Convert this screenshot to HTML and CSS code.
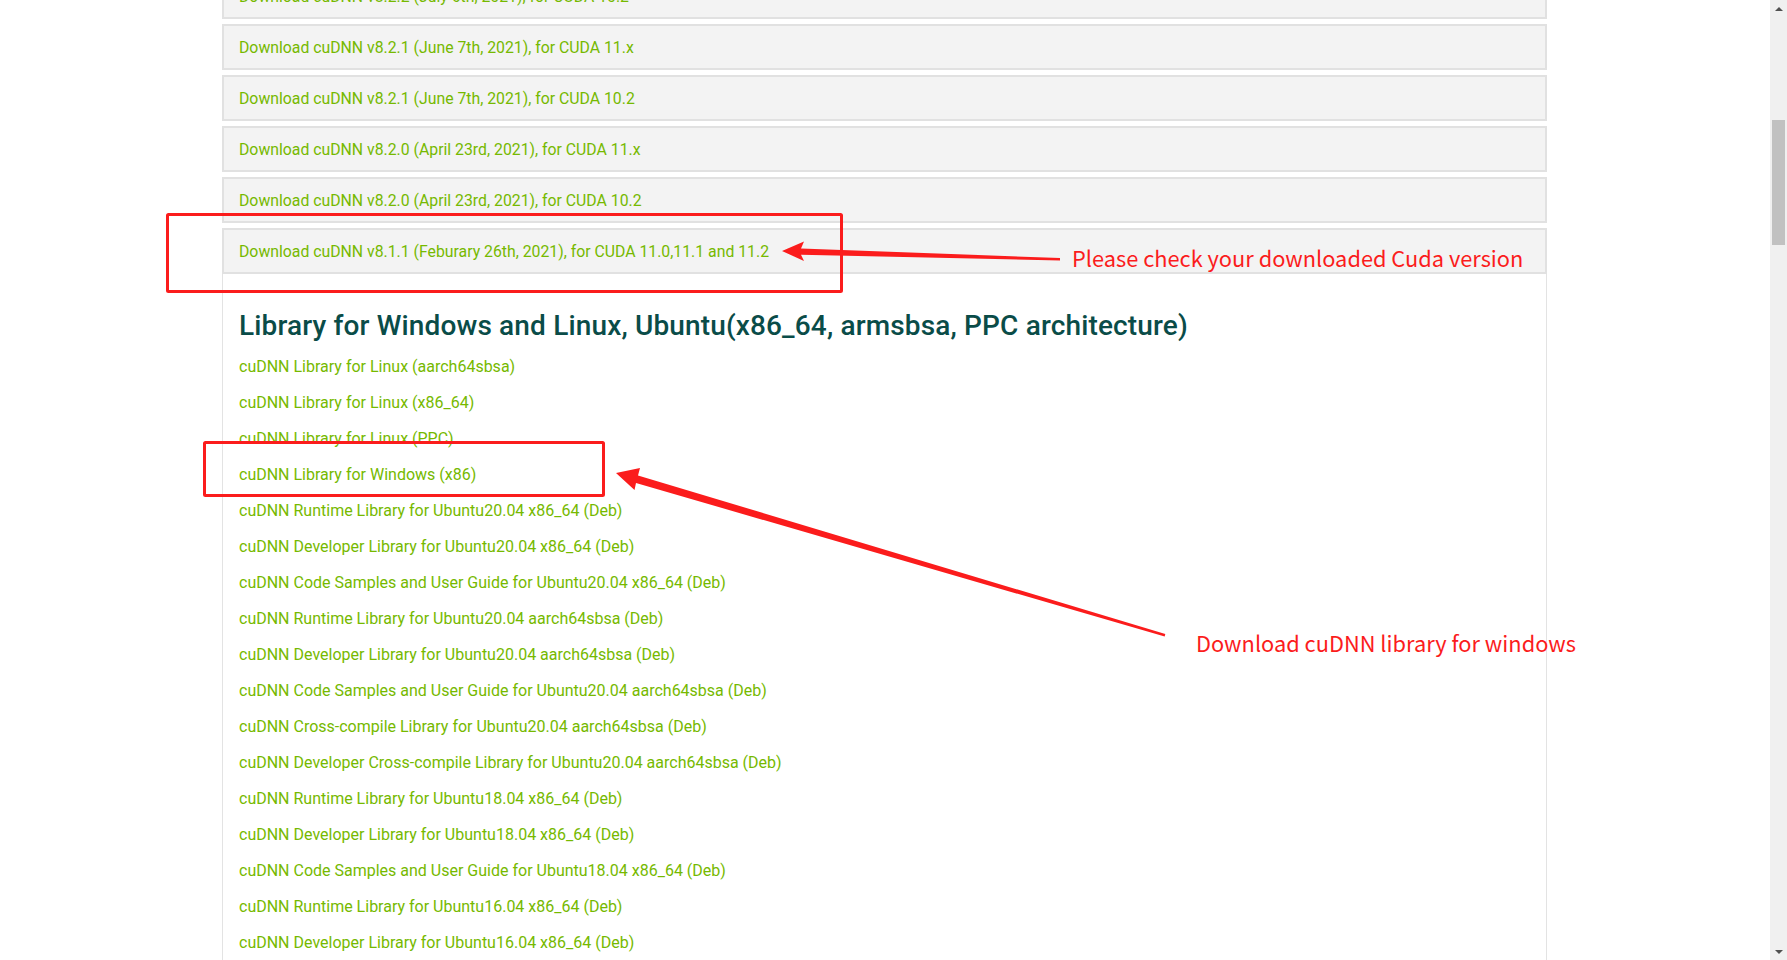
FILE: index.html
```html
<!DOCTYPE html>
<html lang="en">
<head>
<meta charset="utf-8">
<title>cuDNN Download</title>
<link rel="stylesheet" href="styles.css">
</head>
<body>
<div class="page">
  <div class="accordion">
    <div class="panel-head"><a class="dl">Download cuDNN v8.2.2 (July 6th, 2021), for CUDA 10.2</a></div>
    <div class="panel-head"><a class="dl">Download cuDNN v8.2.1 (June 7th, 2021), for CUDA 11.x</a></div>
    <div class="panel-head"><a class="dl">Download cuDNN v8.2.1 (June 7th, 2021), for CUDA 10.2</a></div>
    <div class="panel-head"><a class="dl">Download cuDNN v8.2.0 (April 23rd, 2021), for CUDA 11.x</a></div>
    <div class="panel-head"><a class="dl">Download cuDNN v8.2.0 (April 23rd, 2021), for CUDA 10.2</a></div>
    <div class="panel">
      <div class="panel-head"><a class="dl">Download cuDNN v8.1.1 (Feburary 26th, 2021), for CUDA 11.0,11.1 and 11.2</a></div>
      <div class="panel-body">
        <h2 class="lib-title">Library for Windows and Linux, Ubuntu(x86_64, armsbsa, PPC architecture)</h2>
        <ul class="lib-list">
          <li><a>cuDNN Library for Linux (aarch64sbsa)</a></li>
          <li><a>cuDNN Library for Linux (x86_64)</a></li>
          <li><a>cuDNN Library for Linux (PPC)</a></li>
          <li><a>cuDNN Library for Windows (x86)</a></li>
          <li><a>cuDNN Runtime Library for Ubuntu20.04 x86_64 (Deb)</a></li>
          <li><a>cuDNN Developer Library for Ubuntu20.04 x86_64 (Deb)</a></li>
          <li><a>cuDNN Code Samples and User Guide for Ubuntu20.04 x86_64 (Deb)</a></li>
          <li><a>cuDNN Runtime Library for Ubuntu20.04 aarch64sbsa (Deb)</a></li>
          <li><a>cuDNN Developer Library for Ubuntu20.04 aarch64sbsa (Deb)</a></li>
          <li><a>cuDNN Code Samples and User Guide for Ubuntu20.04 aarch64sbsa (Deb)</a></li>
          <li><a>cuDNN Cross-compile Library for Ubuntu20.04 aarch64sbsa (Deb)</a></li>
          <li><a>cuDNN Developer Cross-compile Library for Ubuntu20.04 aarch64sbsa (Deb)</a></li>
          <li><a>cuDNN Runtime Library for Ubuntu18.04 x86_64 (Deb)</a></li>
          <li><a>cuDNN Developer Library for Ubuntu18.04 x86_64 (Deb)</a></li>
          <li><a>cuDNN Code Samples and User Guide for Ubuntu18.04 x86_64 (Deb)</a></li>
          <li><a>cuDNN Runtime Library for Ubuntu16.04 x86_64 (Deb)</a></li>
          <li><a>cuDNN Developer Library for Ubuntu16.04 x86_64 (Deb)</a></li>
        </ul>
      </div>
    </div>
  </div>

  <svg class="marks" width="1770" height="960" viewBox="0 0 1770 960" xmlns="http://www.w3.org/2000/svg">
    <rect x="167.5" y="214.5" width="674" height="77" fill="none" stroke="#fb1c1c" stroke-width="3" rx="1"/>
    <rect x="204.5" y="442.5" width="399" height="53" fill="none" stroke="#fb1c1c" stroke-width="3" rx="1"/>
    <polygon fill="#fb1c1c" points="782,251 804,241.5 801,248.5 1060,258 1060,260.5 801,254.7 804,261"/>
    <polygon fill="#fb1c1c" points="616,473 640,468 638,475.4 1165.3,634 1164.7,636.5 636,483 634.5,490"/>
  </svg>
  <div class="note note-cuda">Please check your downloaded Cuda version</div>
  <div class="note note-win">Download cuDNN library for windows</div>
</div>
<div class="scrollbar">
  <div class="sb-btn"><span class="tri-up"></span></div>
  <div class="sb-track"><div class="sb-thumb"></div></div>
  <div class="sb-btn"><span class="tri-down"></span></div>
</div>
</body>
</html>
```
FILE: styles.css
```css
html, body {
  margin: 0;
  padding: 0;
  background: #ffffff;
}
body {
  display: flex;
  width: 1787px;
  height: 960px;
  overflow: hidden;
  font-family: Roboto, "Liberation Sans", sans-serif;
}
.page {
  position: relative;
  flex: 1;
  height: 960px;
  overflow: hidden;
}
.accordion {
  margin: -27px 0 0 222px;
  width: 1325px;
  display: flex;
  flex-direction: column;
  gap: 5px;
}
.panel {
  display: flex;
  flex-direction: column;
}
.panel-head {
  box-sizing: border-box;
  height: 46px;
  border: 2px solid #e1e1e1;
  background: #f3f3f3;
  padding-left: 15px;
  display: flex;
  align-items: center;
}
.dl {
  color: #76b900;
  font-size: 15.8px;
  text-decoration: none;
}
.lib-list a {
  color: #76b900;
  font-size: 16px;
  text-decoration: none;
}
.panel-body {
  border-left: 1px solid #e3e3e3;
  border-right: 1px solid #e3e3e3;
  padding: 36px 0 0 16px;
  height: 700px;
}
.lib-title {
  margin: 0;
  font-size: 28px;
  line-height: 32px;
  font-weight: 500;
  color: #0a4c48;
  letter-spacing: 0.15px;
}
.lib-list {
  list-style: none;
  margin: 7px 0 0 0;
  padding: 0;
}
.lib-list li {
  height: 36px;
  line-height: 36px;
}
.marks {
  position: absolute;
  left: 0;
  top: 0;
  pointer-events: none;
}
.note {
  position: absolute;
  color: #fb1c1c;
  font-family: "Noto Sans CJK SC", "Noto Sans", sans-serif;
  font-size: 21.8px;
  line-height: 28px;
  white-space: nowrap;
}
.note-cuda {
  left: 1072px;
  top: 244px;
}
.note-win {
  left: 1196px;
  top: 629px;
}
.scrollbar {
  width: 17px;
  height: 960px;
  background: #f0f0f0;
  display: flex;
  flex-direction: column;
}
.sb-btn {
  height: 17px;
  display: flex;
  align-items: center;
  justify-content: center;
}
.tri-up {
  width: 0;
  height: 0;
  border-left: 4px solid transparent;
  border-right: 4px solid transparent;
  border-bottom: 4px solid #505050;
}
.tri-down {
  width: 0;
  height: 0;
  border-left: 4px solid transparent;
  border-right: 4px solid transparent;
  border-top: 4px solid #505050;
}
.sb-track {
  flex: 1;
  padding: 103px 2px 0 2px;
}
.sb-thumb {
  height: 125px;
  background: #c1c1c1;
}
```
